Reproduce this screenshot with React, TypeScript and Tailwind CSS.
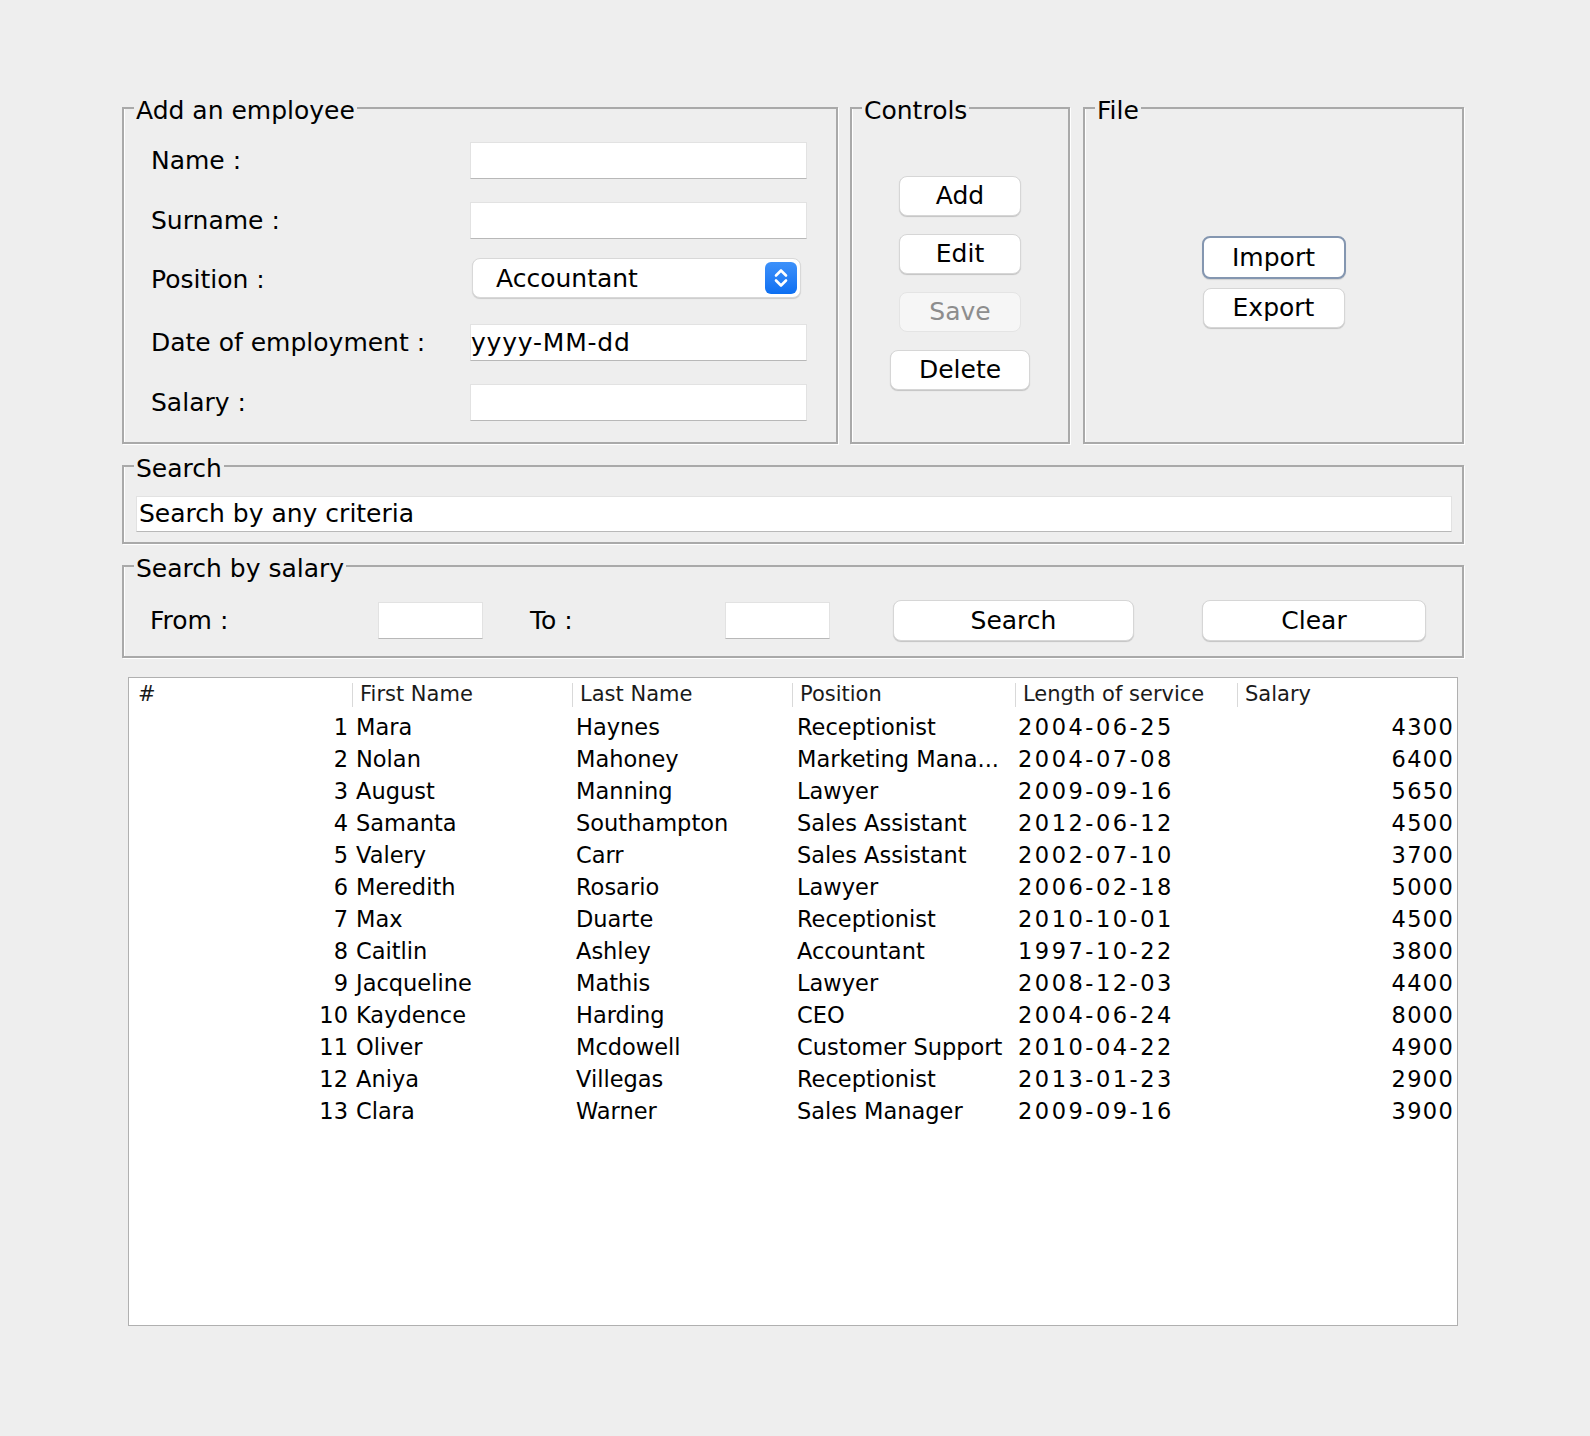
import React from "react"
import clsx from "clsx"

const rows = [
  [1, "Mara", "Haynes", "Receptionist", "2004-06-25", 4300],
  [2, "Nolan", "Mahoney", "Marketing Mana...", "2004-07-08", 6400],
  [3, "August", "Manning", "Lawyer", "2009-09-16", 5650],
  [4, "Samanta", "Southampton", "Sales Assistant", "2012-06-12", 4500],
  [5, "Valery", "Carr", "Sales Assistant", "2002-07-10", 3700],
  [6, "Meredith", "Rosario", "Lawyer", "2006-02-18", 5000],
  [7, "Max", "Duarte", "Receptionist", "2010-10-01", 4500],
  [8, "Caitlin", "Ashley", "Accountant", "1997-10-22", 3800],
  [9, "Jacqueline", "Mathis", "Lawyer", "2008-12-03", 4400],
  [10, "Kaydence", "Harding", "CEO", "2004-06-24", 8000],
  [11, "Oliver", "Mcdowell", "Customer Support", "2010-04-22", 4900],
  [12, "Aniya", "Villegas", "Receptionist", "2013-01-23", 2900],
  [13, "Clara", "Warner", "Sales Manager", "2009-09-16", 3900],
] as const

const headers = ["First Name", "Last Name", "Position", "Length of service", "Salary"]

function Group({ title, className, children }: { title: string; className?: string; children?: React.ReactNode }) {
  return (
    <fieldset
      className={clsx(
        "border-2 border-[#a9a9a9] shadow-[1px_1px_0_#ffffff,inset_1px_0_0_#ffffff]",
        className
      )}
    >
      <legend className="ml-[10px] px-[2px] text-[25px] leading-[30px] text-black">
        <span className="relative top-[3px]">{title}</span>
      </legend>
      {children}
    </fieldset>
  )
}

function Field({ className, value }: { className?: string; value?: string }) {
  return (
    <div
      className={clsx(
        "bg-white border border-[#e2e2e2] border-b-[#b8b8b8] flex items-center text-[25px] text-black",
        className
      )}
    >
      {value}
    </div>
  )
}

function Button({ label, className, disabled, focused }: { label: string; className?: string; disabled?: boolean; focused?: boolean }) {
  let look = "bg-white text-black border border-[#d6d6d6] shadow-[0_1px_1px_rgba(0,0,0,0.18)]"
  if (disabled) look = "bg-[#f6f6f6] text-[#8d8d8d] border border-[#e4e4e4]"
  if (focused) look = "bg-white text-black border-2 border-[#8496b0] shadow-[0_1px_1px_rgba(0,0,0,0.12)]"
  return (
    <div className={clsx("flex items-center justify-center rounded-[8px] text-[25px]", look, className)}>
      {label}
    </div>
  )
}

function FormRow({ label, children, className }: { label: string; children: React.ReactNode; className?: string }) {
  return (
    <div className={clsx("flex items-center", className)}>
      <span className="w-[319px] text-[25px] text-black">{label}</span>
      {children}
    </div>
  )
}

export default function App() {
  return (
    <div className="w-full h-[1436px] bg-[#eeeeee] pt-[93px] font-['DejaVu_Sans',sans-serif] overflow-hidden">
      <div className="ml-[122px] w-[1342px]">
        {/* top row */}
        <div className="flex">
          <Group title="Add an employee" className="w-[716px] h-[351px]">
            <div className="pl-[27px] pt-[19px]">
              <FormRow label="Name :" className="h-[37px]">
                <Field className="w-[337px] h-[37px]" />
              </FormRow>
              <FormRow label="Surname :" className="h-[37px] mt-[23px]">
                <Field className="w-[337px] h-[37px]" />
              </FormRow>
              <FormRow label="Position :" className="h-[40px] mt-[19px] pt-[4px]">
                <div className="ml-[2px] -mt-[4px] w-[329px] h-[40px] rounded-[8px] bg-white border border-[#d8d8d8] shadow-[0_1px_1px_rgba(0,0,0,0.15)] flex items-center justify-between pl-[23px] pr-[3px]">
                  <span className="text-[25px] text-black pt-[2px]">Accountant</span>
                  <div className="w-[32px] h-[32px] rounded-[6px] bg-gradient-to-b from-[#3d91fa] to-[#0b6ff2] flex items-center justify-center">
                    <svg width="32" height="32" viewBox="0 0 32 32" fill="none">
                      <path d="M11 13.5 L16 8.5 L21 13.5" stroke="white" strokeWidth="2.6" strokeLinecap="round" strokeLinejoin="round" />
                      <path d="M11 18.5 L16 23.5 L21 18.5" stroke="white" strokeWidth="2.6" strokeLinecap="round" strokeLinejoin="round" />
                    </svg>
                  </div>
                </div>
              </FormRow>
              <FormRow label="Date of employment :" className="h-[37px] mt-[26px]">
                <Field className="w-[337px] h-[37px] tracking-[0.8px]" value="yyyy-MM-dd" />
              </FormRow>
              <FormRow label="Salary :" className="h-[37px] mt-[23px]">
                <Field className="w-[337px] h-[37px]" />
              </FormRow>
            </div>
          </Group>

          <Group title="Controls" className="ml-[12px] w-[220px] h-[351px]">
            <div className="flex flex-col items-center pt-[53px] gap-[18px]">
              <Button label="Add" className="w-[122px] h-[40px]" />
              <Button label="Edit" className="w-[122px] h-[40px]" />
              <Button label="Save" className="w-[122px] h-[40px]" disabled />
              <Button label="Delete" className="w-[140px] h-[40px]" />
            </div>
          </Group>

          <Group title="File" className="ml-[13px] w-[381px] h-[351px]">
            <div className="flex flex-col items-center pt-[113px] gap-[9px]">
              <Button label="Import" className="w-[144px] h-[43px]" focused />
              <Button label="Export" className="w-[142px] h-[40px]" />
            </div>
          </Group>
        </div>

        {/* search */}
        <Group title="Search" className="mt-[7px] h-[93px]">
          <div className="pl-[12px] pr-[10px] pt-[15px]">
            <Field className="w-full h-[36px] pl-[2px] text-[24.5px]" value="Search by any criteria" />
          </div>
        </Group>

        {/* search by salary */}
        <Group title="Search by salary" className="mt-[7px] h-[107px]">
          <div className="flex items-center pl-[26px] pt-[19px]">
            <span className="w-[228px] text-[25px] text-black">From :</span>
            <Field className="w-[105px] h-[37px]" />
            <span className="ml-[47px] w-[195px] text-[25px] text-black">To :</span>
            <Field className="w-[105px] h-[37px]" />
            <Button label="Search" className="ml-[63px] w-[241px] h-[41px]" />
            <Button label="Clear" className="ml-[68px] w-[224px] h-[41px]" />
          </div>
        </Group>

        {/* table */}
        <div className="mt-[19px] mx-[6px] h-[649px] bg-white border border-[#b0b0b0]">
          <div className="grid grid-cols-[223px_220px_220px_223px_222px_220px] h-[33px] items-center text-[21px] text-[#1a1a1a]">
            <div className="pl-[9px]">#</div>
            {headers.map((h) => (
              <div key={h} className="flex items-center h-[33px]">
                <div className="h-[24px] border-l border-[#d9d9d9]" />
                <span className="pl-[7px]">{h}</span>
              </div>
            ))}
          </div>
          {rows.map((r) => (
            <div
              key={r[0]}
              className="grid grid-cols-[223px_220px_220px_223px_222px_220px] h-[32px] items-center text-[22.5px] text-black whitespace-nowrap"
            >
              <div className="text-right pr-[4px]">{r[0]}</div>
              <div className="pl-[4px]">{r[1]}</div>
              <div className="pl-[4px]">{r[2]}</div>
              <div className="pl-[5px] overflow-hidden">{r[3]}</div>
              <div className="pl-[3px] tracking-[2.5px]">{r[4]}</div>
              <div className="text-right pr-[3px] tracking-[1.3px]">{r[5]}</div>
            </div>
          ))}
        </div>
      </div>
    </div>
  )
}
